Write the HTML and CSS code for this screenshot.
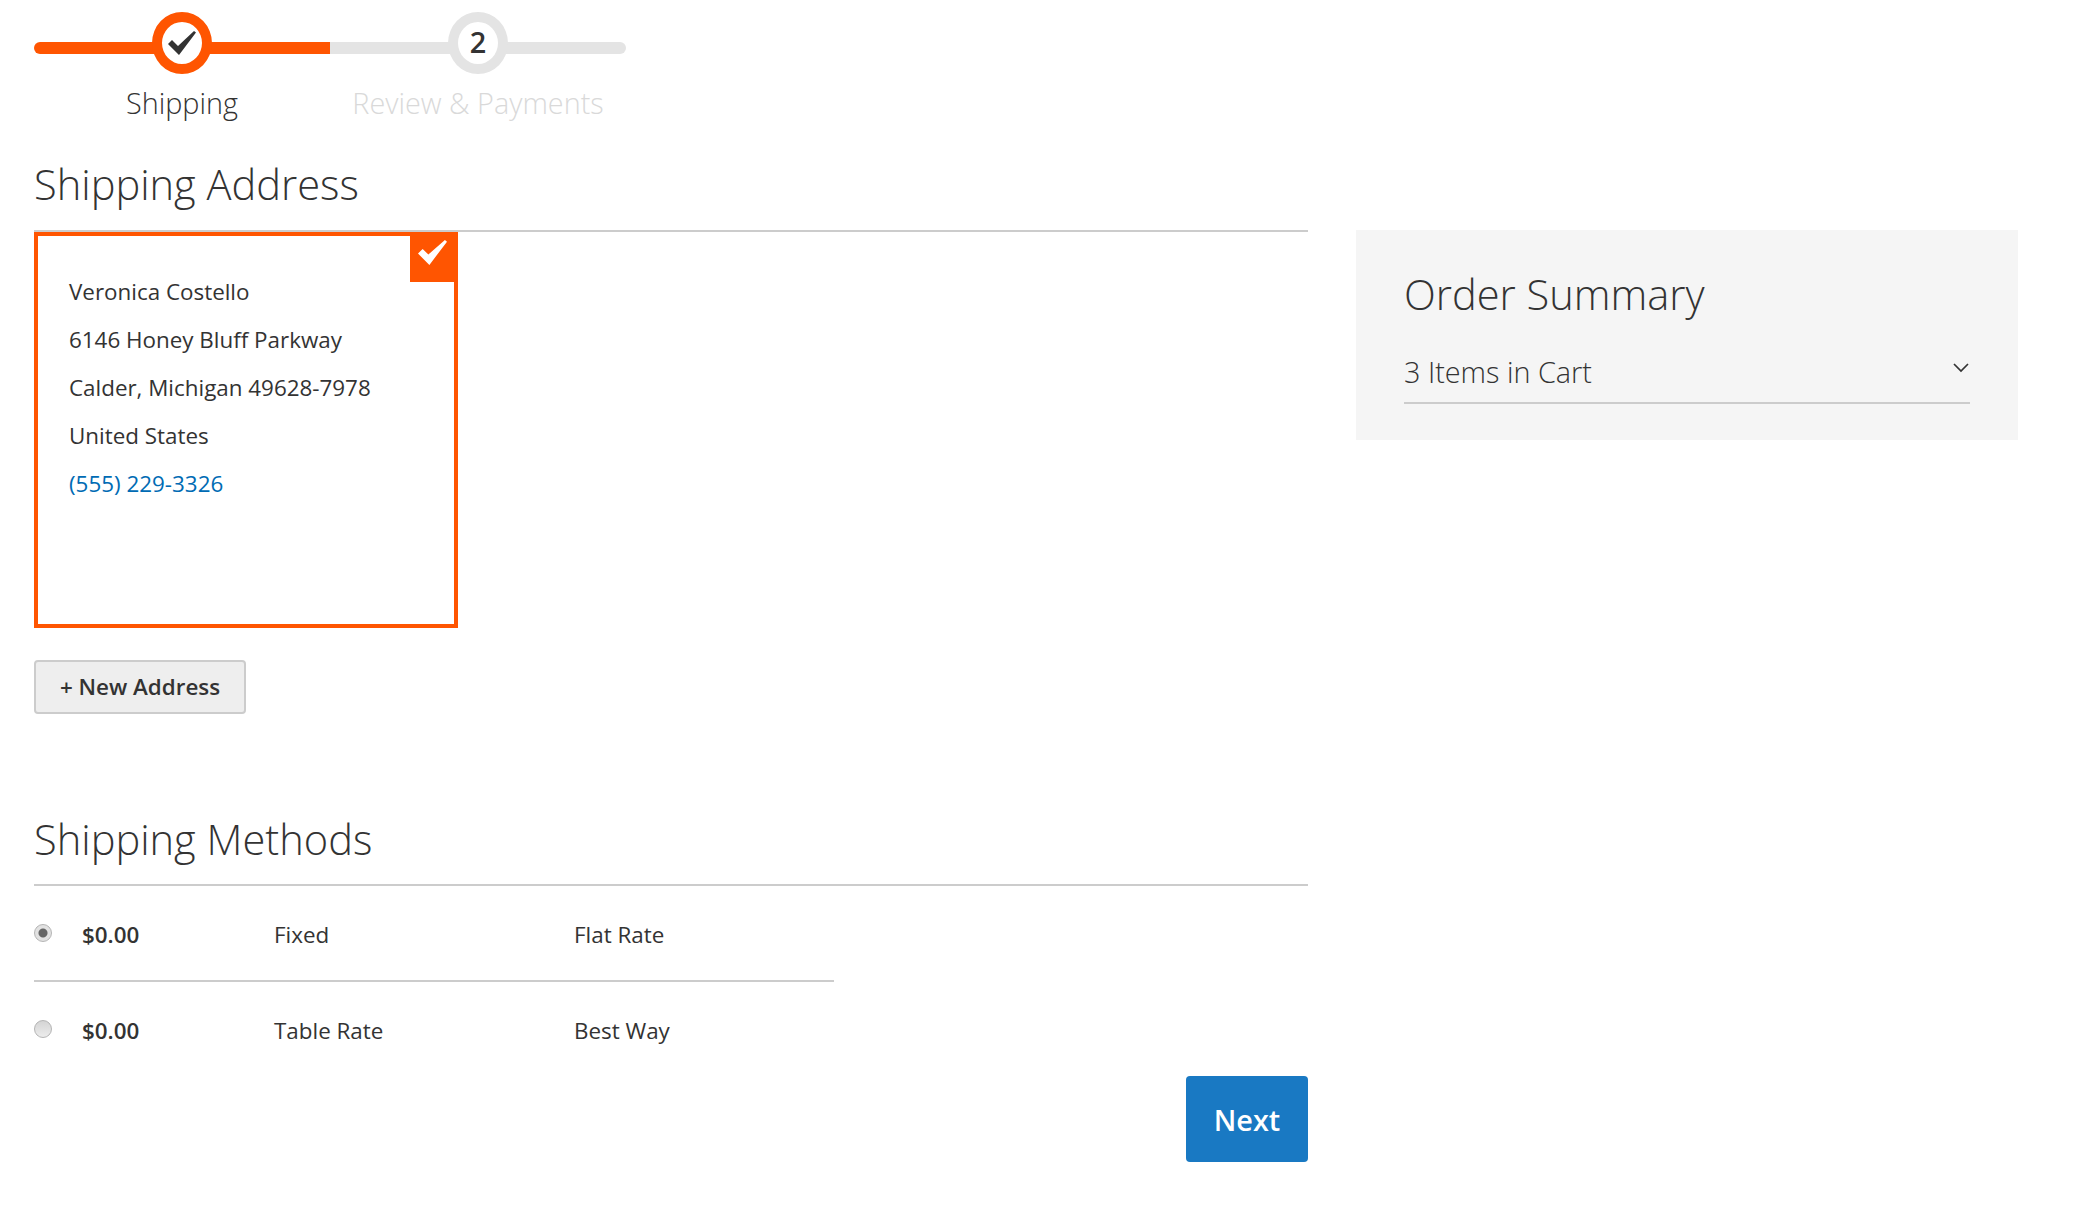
FILE: index.html
```html
<!DOCTYPE html>
<html lang="en">
<head>
<meta charset="utf-8">
<title>Checkout</title>
<link rel="stylesheet" href="styles.css">
</head>
<body>
<div class="page">
  <ol class="progress">
    <li class="step step-done">
      <span class="step-bar"></span>
      <span class="step-circle"><svg class="step-check" viewBox="0 0 28 24"><path d="M0 13L4 9L10 15L26 0L28 1.5L11 24Z"/></svg></span>
      <span class="step-label">Shipping</span>
    </li>
    <li class="step step-todo">
      <span class="step-bar"></span>
      <span class="step-circle">2</span>
      <span class="step-label">Review &amp; Payments</span>
    </li>
  </ol>
  <div class="columns">
    <main class="main">
      <h2 class="section-title">Shipping Address</h2>
      <div class="address-card">
        <span class="address-badge"><svg class="badge-check" viewBox="0 0 28 24"><path d="M0 13L4.5 8.5L10 14L26 0L28 1.5L11 24Z"/></svg></span>
        <p class="address-line">Veronica Costello</p>
        <p class="address-line">6146 Honey Bluff Parkway</p>
        <p class="address-line">Calder, Michigan 49628-7978</p>
        <p class="address-line">United States</p>
        <p class="address-line"><a class="phone" href="#">(555) 229-3326</a></p>
      </div>
      <button class="new-address" type="button">+ New Address</button>
      <h2 class="section-title methods-title">Shipping Methods</h2>
      <div class="methods">
        <label class="method method-first">
          <input class="radio" type="radio" name="m" checked>
          <span class="price">$0.00</span>
          <span>Fixed</span>
          <span>Flat Rate</span>
        </label>
        <label class="method">
          <input class="radio" type="radio" name="m">
          <span class="price">$0.00</span>
          <span>Table Rate</span>
          <span>Best Way</span>
        </label>
      </div>
      <div class="actions"><button class="next" type="button">Next</button></div>
    </main>
    <aside class="summary">
      <h2 class="summary-title">Order Summary</h2>
      <div class="cart-row">
        <span>3 Items in Cart</span>
        <svg class="chevron" viewBox="0 0 16 10"><path d="M1 1L8 8L15 1"/></svg>
      </div>
    </aside>
  </div>
</div>
</body>
</html>
```
FILE: styles.css
```css
* { box-sizing: border-box; }
html, body { margin: 0; padding: 0; background: #fff; }
body {
  font-family: "Open Sans", "Liberation Sans", sans-serif;
  color: #333;
  font-size: 22.4px;
}
.page { padding: 12px 78px 0 34px; }

.progress {
  list-style: none;
  display: flex;
  margin: 0;
  padding: 0;
}
.step {
  position: relative;
  width: 296px;
  height: 110px;
  display: flex;
  align-items: flex-end;
  justify-content: center;
}
.step-bar {
  position: absolute;
  left: 0;
  right: 0;
  top: 30px;
  height: 12px;
}
.step-done .step-bar { background: #ff5501; border-radius: 6px 0 0 6px; }
.step-todo .step-bar { background: #e4e4e4; border-radius: 0 6px 6px 0; }
.step-circle {
  position: absolute;
  left: 118px;
  top: 0;
  width: 60px;
  height: 62px;
  border-radius: 50%;
  background: #fff;
  display: flex;
  align-items: center;
  justify-content: center;
  font-size: 28.8px;
  font-weight: 600;
  line-height: 38px;
}
.step-done .step-circle { border: 10px solid #ff5501; }
.step-todo .step-circle { border: 10px solid #e4e4e4; padding-bottom: 2px; }
.step-check { width: 28px; height: 24px; fill: #333; flex: none; }
.step-label {
  font-size: 28.8px;
  font-weight: 300;
  line-height: 32px;
  margin-bottom: 3px;
}
.step-todo .step-label { color: #d9d9d9; }

.columns {
  display: flex;
  justify-content: space-between;
  align-items: flex-start;
}
.main { width: 1274px; }
.section-title {
  margin: 0;
  height: 110px;
  padding-top: 39px;
  font-size: 41.6px;
  line-height: 46px;
  font-weight: 300;
  border-bottom: 2px solid #ccc;
}
.address-card {
  position: relative;
  width: 424px;
  height: 396px;
  border: 4px solid #ff5501;
  padding: 32px 31px 0;
}
.address-badge {
  position: absolute;
  right: -4px;
  top: -4px;
  width: 48px;
  height: 50px;
  background: #ff5501;
  display: flex;
  justify-content: flex-start;
  padding: 8px 0 0 8px;
}
.badge-check { width: 29px; height: 25px; fill: #fff; }
.address-line { margin: 0; line-height: 48px; height: 48px; font-size: 22.4px; }
.phone { color: #006bb4; text-decoration: none; }
.new-address {
  display: block;
  margin-top: 32px;
  width: 212px;
  height: 54px;
  padding: 0 0 2px;
  border: 2px solid #ccc;
  border-radius: 4px;
  background: #eee;
  color: #333;
  font-family: inherit;
  font-size: 22.4px;
  font-weight: 600;
}
.methods-title { margin-top: 64px; height: 108px; padding-top: 38px; }
.methods { width: 800px; }
.method {
  display: grid;
  grid-template-columns: 48px 192px 300px 1fr;
  align-items: center;
  height: 96px;
}
.method-first { border-bottom: 2px solid #ccc; padding-top: 2px; }
.radio {
  appearance: none;
  margin: 0;
  width: 18px;
  height: 18px;
  border-radius: 50%;
  border: 1px solid #b4b4b4;
  background: linear-gradient(#d4d4d4, #ececec);
  position: relative;
  top: -1px;
}
.radio:checked {
  background: radial-gradient(circle, #666 0 4px, #e2e2e2 5px);
}
.price { font-weight: 600; }
.actions { display: flex; justify-content: flex-end; margin-top: -2px; }
.next {
  width: 122px;
  height: 86px;
  padding: 0;
  border: 0;
  border-radius: 4px;
  background: #1979c3;
  color: #fff;
  font-family: inherit;
  font-size: 28.8px;
  font-weight: 600;
}
.summary {
  width: 662px;
  height: 210px;
  background: #f5f5f5;
  padding: 41px 48px 0;
  margin-top: 108px;
}
.summary-title {
  margin: 0;
  font-size: 41.6px;
  line-height: 46px;
  font-weight: 300;
}
.cart-row {
  display: flex;
  justify-content: space-between;
  align-items: flex-start;
  height: 87px;
  padding-top: 39px;
  font-size: 28.8px;
  font-weight: 300;
  line-height: 32px;
  border-bottom: 2px solid #ccc;
}
.chevron {
  width: 16px;
  height: 10px;
  margin: 7px 1px 0 0;
  fill: none;
  stroke: #333;
  stroke-width: 1.7;
}
```
